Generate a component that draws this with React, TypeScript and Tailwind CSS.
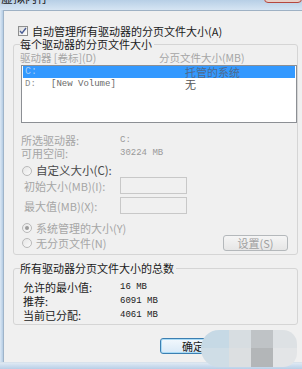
import React from "react";

const cjk = { fontFamily: '"Noto Sans CJK SC", "Noto Sans", sans-serif' };
const mono = { fontFamily: '"Liberation Mono", "DejaVu Sans Mono", monospace' };

function Radio({ checked }: { checked?: boolean }) {
  return (
    <span className="w-[10px] h-[10px] rounded-full border border-[#b9b9b9] bg-gradient-to-br from-[#e6e6e6] to-[#fafafa] flex items-center justify-center shrink-0">
      {checked && <span className="w-[4px] h-[4px] rounded-full bg-[#9c9c9c]" />}
    </span>
  );
}

export default function App() {
  return (
    <div className="w-[302px] h-[369px] relative overflow-hidden bg-[#bfd5eb] flex flex-col text-[11px] leading-[12px]" style={cjk}>
      {/* title bar */}
      <div className="h-[10px] relative bg-gradient-to-b from-[#b7cfe6] to-[#d6e5f3] overflow-hidden">
        <div className="absolute left-[1px] top-[-8px] text-[12px] leading-[12px] text-[#1e1e1e]">虚拟内存</div>
        <div className="absolute right-0 top-[-12px] w-[38px] h-[15px] rounded-b-[4px] border border-[#b5473e] bg-[#e7cfc8]" />
      </div>
      <div className="flex flex-1">
        <div className="w-[4px] bg-gradient-to-r from-[#dce8f4] to-[#b4cce4] border-r border-[#9fb4c9]" />
        <div className="flex-1 bg-[#f0f0f0] border-t border-[#9eb1c4] flex flex-col">
          {/* auto manage checkbox */}
          <div className="mt-[14px] pl-[14px] flex items-center h-[12px] gap-[4px] text-[#1a1a1a] leading-[12px]">
            <span className="w-[10px] h-[10px] border border-[#8e8f8f] bg-gradient-to-br from-[#dcdcdc] to-[#ffffff] flex items-center justify-center shrink-0">
              <svg width="8" height="8" viewBox="0 0 8 8">
                <path d="M1 4 L3 6.2 L7 1" stroke="#4a5d94" strokeWidth="1.4" fill="none" />
              </svg>
            </span>
            <span>自动管理所有驱动器的分页文件大小(A)</span>
          </div>

          {/* group 1 */}
          <fieldset className="mt-[1px] ml-[9px] w-[285px] border border-[#d5d5d5] rounded-[3px] pl-[7px] pr-0 pb-[3px]">
            <legend className="leading-[12px] text-[#1a1a1a] ml-[-1px] pr-[2px]">每个驱动器的分页文件大小</legend>
            <div className="mt-[2px] flex h-[11px] leading-[11px] text-[#a6a6a6] text-[10.5px]">
              <span className="w-[139px] ml-[-1px]">驱动器 [卷标](D)</span>
              <span>分页文件大小(MB)</span>
            </div>
            <div className="mt-[2px] w-[276px] h-[58px] border border-[#8c8f94] bg-white">
              <div className="mx-[1px] h-[12px] bg-[#3399ff] flex items-center leading-[12px]">
                <span className="w-[162px] pl-[2px] text-[10px] text-[#a9cdf3]" style={mono}>C:</span>
                <span className="text-[#50698c]">托管的系统</span>
              </div>
              <div className="mx-[1px] h-[12px] flex items-center leading-[12px]">
                <span className="w-[28px] pl-[2px] text-[9px] text-[#8a8a8a]" style={mono}>D:</span>
                <span className="w-[134px] text-[9px] text-[#6a6a6a]" style={mono}>[New Volume]</span>
                <span className="text-[#555]">无</span>
              </div>
            </div>
            <div className="mt-[11px] text-[#a6a6a6] leading-[13px]">
              <div className="flex h-[13px] items-center">
                <span className="w-[99px]">所选驱动器:</span>
                <span className="text-[9px] text-[#9a9a9a]" style={mono}>C:</span>
              </div>
              <div className="flex h-[13px] items-center">
                <span className="w-[99px]">可用空间:</span>
                <span className="text-[9px] text-[#9a9a9a]" style={mono}>30224 MB</span>
              </div>
            </div>
            <div className="mt-[4px] flex h-[13px] items-center gap-[4px] pl-[1px] leading-[13px]">
              <Radio />
              <span className="text-[#4a4a4a] text-[11.5px]">自定义大小(C):</span>
            </div>
            <div className="flex h-[17px] items-center text-[#a6a6a6]">
              <span className="w-[99px] pl-[3px]">初始大小(MB)(I):</span>
              <span className="w-[67px] h-[17px] border border-[#c8c8c8] bg-[#f0f0f0]" />
            </div>
            <div className="mt-[3px] flex h-[17px] items-center text-[#a6a6a6]">
              <span className="w-[99px] pl-[3px]">最大值(MB)(X):</span>
              <span className="w-[67px] h-[17px] border border-[#c8c8c8] bg-[#f0f0f0]" />
            </div>
            <div className="mt-[7px] flex h-[14px] items-center gap-[4px] pl-[1px] text-[#a6a6a6]">
              <Radio checked />
              <span>系统管理的大小(Y)</span>
            </div>
            <div className="flex h-[16px] items-center gap-[4px] pl-[1px] text-[#a6a6a6]">
              <Radio />
              <span>无分页文件(N)</span>
              <button className="ml-auto mr-[9px] w-[65px] h-[16px] rounded-[3px] border border-[#b4b8bb] bg-gradient-to-b from-[#f5f5f5] to-[#e6e6e6] text-[#a0a0a0] text-[11px] leading-[14px]" style={cjk}>
                设置(S)
              </button>
            </div>
          </fieldset>

          {/* group 2 */}
          <fieldset className="mt-[7px] ml-[9px] w-[285px] border border-[#d5d5d5] rounded-[3px] pl-[7px] pb-[2px]">
            <legend className="leading-[12px] text-[#1a1a1a] ml-[-1px] pr-[2px]">所有驱动器分页文件大小的总数</legend>
            <div className="mt-[6px] pl-[2px] text-[#1a1a1a] leading-[14px]">
              <div className="flex h-[14px] items-center">
                <span className="w-[97px]">允许的最小值:</span>
                <span className="text-[9px]" style={mono}>16 MB</span>
              </div>
              <div className="flex h-[14px] items-center">
                <span className="w-[97px]">推荐:</span>
                <span className="text-[9px]" style={mono}>6091 MB</span>
              </div>
              <div className="flex h-[14px] items-center">
                <span className="w-[97px]">当前已分配:</span>
                <span className="text-[9px]" style={mono}>4061 MB</span>
              </div>
            </div>
          </fieldset>

          {/* buttons */}
          <div className="mt-[13px] pl-[156px] flex">
            <button className="w-[66px] h-[16px] rounded-[3px] border border-[#3c7fb1] bg-gradient-to-b from-[#f2f8fd] to-[#d9e9f7] text-[#1a1a1a] text-[11px] leading-[14px] shadow-[inset_0_0_0_1px_#a9dbf6]" style={cjk}>
              确定
            </button>
          </div>
        </div>
      </div>
      <div className="h-[7px] bg-gradient-to-b from-[#dfe9f3] to-[#b8cfe7] border-t border-[#d8e2ec]" />

      {/* blurred mosaic overlay */}
      <div className="absolute left-[201px] top-[330px] w-[96px] h-[37px] rounded-l-[18px] rounded-r-[14px] overflow-hidden flex flex-col">
        <div className="flex h-[18px]">
          <div className="w-[28px] bg-[#c6d9e5]" />
          <div className="w-[22px] bg-[#d7dde1]" />
          <div className="w-[22px] bg-[#bfc3c6]" />
          <div className="w-[24px] bg-[#dde1e4]" />
        </div>
        <div className="flex flex-1">
          <div className="w-[28px] bg-[#cfdde6]" />
          <div className="w-[22px] bg-[#dcdfe1]" />
          <div className="w-[22px] bg-[#b3b6b8]" />
          <div className="w-[24px] bg-[#e3e5e7]" />
        </div>
      </div>
    </div>
  );
}
